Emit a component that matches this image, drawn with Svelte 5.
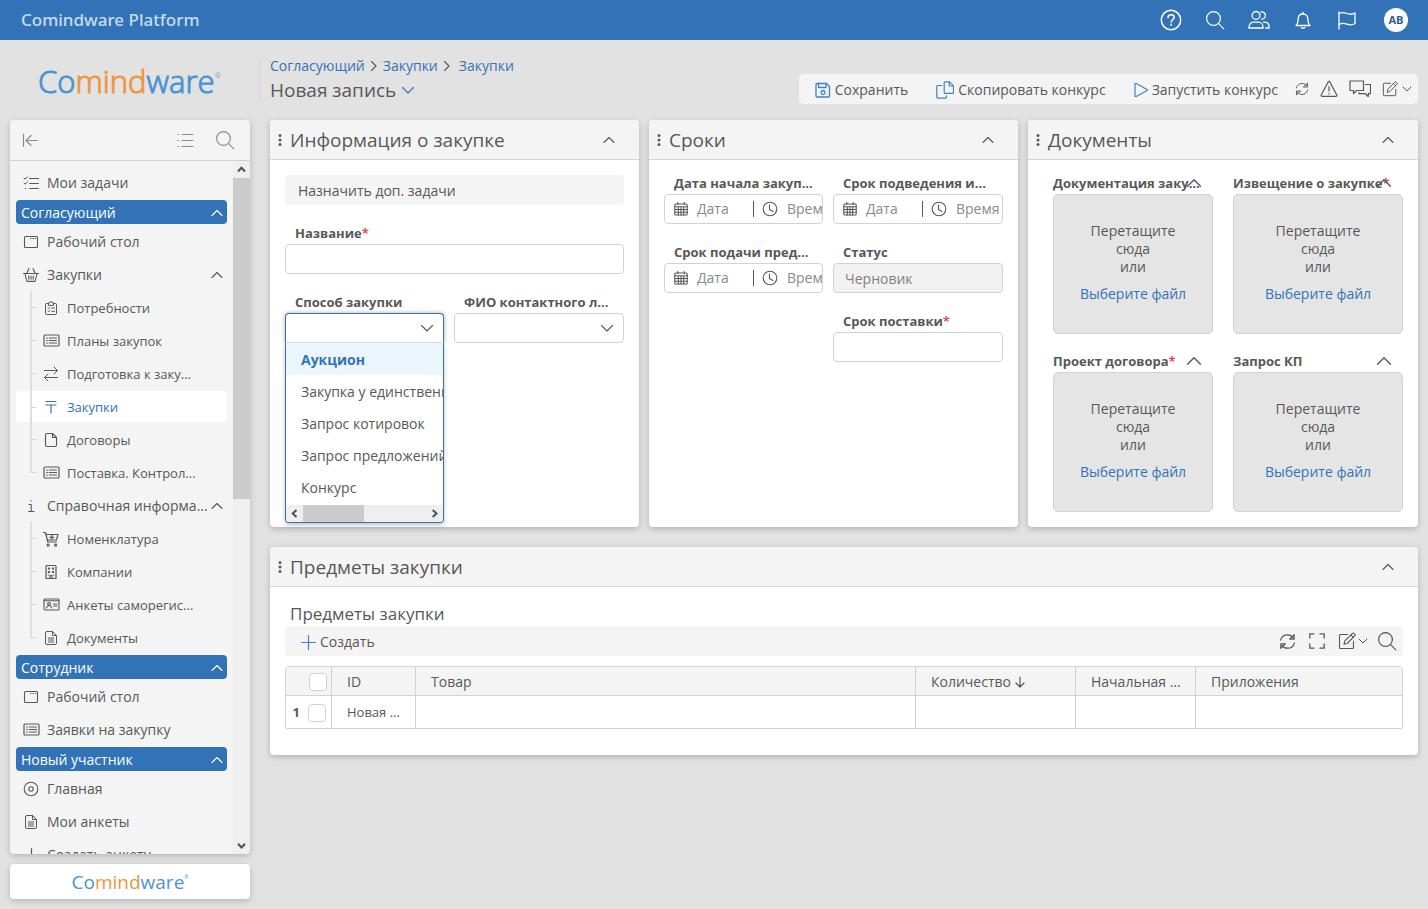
<script>
  const icons = {
    help: { w: 22, d: ['M11 1.300a9.700 9.700 0 1 0 0 19.400a9.700 9.700 0 0 0 0-19.400z', 'M8 8.600c.1-1.900 1.400-2.900 3.100-2.900 1.800 0 3.100 1 3.100 2.600 0 2.300-3 2.300-3 4.600', 'M11.200 15.300v.900'], s: 1.500 },
    search: { w: 20, d: ['M8.500 1.600a6.900 6.900 0 1 0 0 13.800a6.900 6.900 0 0 0 0-13.800z', 'M13.400 13.400l5.400 5.400'], s: 1.200 },
    users: { w: 22, d: ['M8 2.500a3.900 3.900 0 1 0 0 7.800a3.900 3.900 0 0 0 0-7.800z', 'M.8 19c0-4 2.500-5.800 4.700-5.800h5c2.200 0 4.700 1.800 4.700 5.800z', 'M13 3a3.600 3.600 0 1 1 .8 7.100', 'M15.500 13.200h1.200c2.200 0 4.500 1.800 4.500 5.800h-3.500'], s: 1.300 },
    bell: { w: 20, d: ['M3 15.500c1.600-1.500 2.200-3 2.200-6.500 0-3 2-5 4.800-5s4.800 2 4.800 5c0 3.500.6 5 2.200 6.500z', 'M10 4V2.300', 'M8.300 17.300c.3 1.300 3.100 1.300 3.400 0'], s: 1.300 },
    flag: { w: 20, d: ['M2 2v17', 'M2 3.500c3-1.500 5.500-1 8 0s5.500 1 8-.6v10.600c-2.500 1.600-5.500 1.600-8 .6s-5-1.500-8 .4'], s: 1.300 },
    collapse: { w: 18, d: ['M2.500 3v12.500', 'M16.500 9.500H5.500M10 4.500l-5 5 5 5'], s: 1.200 },
    list: { w: 18, d: ['M2 3.500h.6M2 9.500h.6M2 15.500h.6', 'M6 3.500h11M6 9.500h11M6 15.500h11'], s: 1.200 },
    tasks: { w: 16, d: ['M1 3l1.200 1.200L4.500 1.700M1 8l1.200 1.200L4.500 6.700M2.200 13.500h.5', 'M6.500 3.500h9M6.500 8.500h9M6.500 13.500h9'], s: 1 },
    window: { w: 16, d: ['M2.500 2.500h11a1 1 0 0 1 1 1v9a1 1 0 0 1-1 1h-11a1 1 0 0 1-1-1v-9a1 1 0 0 1 1-1z', 'M7.500 4.500h.5M10 4.500h.5M12.500 4.500h.300'], s: 1.100 },
    basket: { w: 16, d: ['M.5 6.500h15', 'M2 6.500l1.600 7a1 1 0 0 0 1 .9h6.800a1 1 0 0 0 1-.9l1.600-7', 'M6 1.500L4 6M10 1.500L12 6', 'M5.800 9v3.200M8 9v3.200M10.200 9v3.200'], s: 1.100 },
    clip: { w: 16, d: ['M5.500 3.500h-2a1 1 0 0 0-1 1v9a1 1 0 0 0 1 1h9a1 1 0 0 0 1-1v-9a1 1 0 0 0-1-1h-2', 'M5.500 5V2.800h1.300a1.200 1.200 0 0 1 2.400 0h1.300V5z', 'M4.800 8l.8.8L7 7.400M8.800 8h2.700M4.800 11l.8.8L7 10.400M8.800 11.300h2.700'], s: 1 },
    panel: { w: 17, d: ['M2 3h13a1 1 0 0 1 1 1v9a1 1 0 0 1-1 1H2a1 1 0 0 1-1-1V4a1 1 0 0 1 1-1z', 'M3.600 6h.8M3.600 8.500h.8M3.600 11h.8M6.300 6h7.200M6.300 8.500h7.200M6.300 11h7.200'], s: 1.200 },
    swap: { w: 16, d: ['M1.500 4.500h13M11 1l3.500 3.500L11 8', 'M14.500 11.500h-13M5 8l-3.500 3.500L5 15'], s: 1 },
    tee: { w: 16, d: ['M3 2.500h10', 'M3 6h10M8 6v8'], s: 1.200 },
    file: { w: 16, d: ['M4 1.500h5.500l4 4V13a1.500 1.500 0 0 1-1.500 1.500H4A1.500 1.500 0 0 1 2.500 13V3A1.500 1.500 0 0 1 4 1.500z', 'M9.500 1.500v4h4'], s: 1.100 },
    doc: { w: 16, d: ['M4 1.500h5.500l4 4V13a1.500 1.500 0 0 1-1.500 1.500H4A1.500 1.500 0 0 1 2.500 13V3A1.500 1.500 0 0 1 4 1.500z', 'M9.500 1.500v4h4', 'M5.300 8h5.400M5.300 10h5.400M5.300 12h5.400'], s: 1 },
    info: { w: 16, d: ['M6 6.500h2.200v7M5.500 13.500h5.500M8 2.500v.6'], s: 1.100 },
    cart: { w: 16, d: ['M.5 1.500h2l2.300 9.500h8.700', 'M3 3.500h12l-1.500 5.500H4.300', 'M8.800 4.300v4M6.800 6.300h4', 'M5 13.200a1 1 0 1 0 .1 0zM12.500 13.200a1 1 0 1 0 .1 0z'], s: 1.200 },
    building: { w: 16, d: ['M4 1.500h8a1 1 0 0 1 1 1v12H3v-12a1 1 0 0 1 1-1z', 'M7 14.500v-3h2v3', 'M5.500 4h1v1h-1zM9.500 4h1v1h-1zM5.500 7.500h1v1h-1zM9.500 7.500h1v1h-1zM5.200 11h.5M10.500 11h.5'], s: 1.200 },
    card: { w: 17, d: ['M2 3h13a1 1 0 0 1 1 1v9a1 1 0 0 1-1 1H2a1 1 0 0 1-1-1V4a1 1 0 0 1 1-1z', 'M1 4.800h15', 'M6 6.500a1.400 1.400 0 1 0 .1 0zM3.500 12c.3-2 1.300-2.500 2.500-2.500s2.200.5 2.500 2.500', 'M10.500 8h3.500M10.500 10h3.500'], s: 1.100 },
    target: { w: 16, d: ['M8 1.200a6.800 6.800 0 1 0 0 13.600a6.800 6.800 0 0 0 0-13.600z', 'M8 5.800a2.200 2.200 0 1 0 0 4.400a2.200 2.200 0 0 0 0-4.400z'], s: 1.100 },
    plus: { w: 16, d: ['M8.500 1.500v14M1.500 8.500h14'], s: 1.200 },
    up: { w: 14, d: ['M2 9.500l5-5 5 5'], s: 1.100 },
    down: { w: 14, d: ['M1.500 4.500l5.500 5.500 5.500-5.500'], s: 1.100 },
    smallDown: { w: 10, d: ['M1 3l4 4 4-4'], s: 1 },
    right: { w: 10, d: ['M2.500 .500L7 5 2.500 9.500'], s: 1.100 },
    save: { w: 16, d: ['M2 1.500h9.500l3 3V14a1 1 0 0 1-1 1H2a1 1 0 0 1-1-1V2.500a1 1 0 0 1 1-1z', 'M3.500 1.500v4h7.500v-4', 'M8 8.500a2 2 0 1 0 .1 0z'], s: 1.300 },
    copy: { w: 18, d: ['M9 .8h4.500l4 4v6.700a.8.8 0 0 1-.8.800H9a.8.8 0 0 1-.8-.8V1.600A.8.8 0 0 1 9 .8z', 'M13.300 .8v4.200h4.200', 'M5.800 4.500H1.600a.8.8 0 0 0-.8.8v11a.8.8 0 0 0 .8.800h8a.8.8 0 0 0 .8-.8v-1.500'], s: 1.200 },
    play: { w: 14, d: ['M1 .8v12.400c0 .5.400.7.800.500l11.300-6.300c.4-.2.400-.6 0-.8L1.800.3C1.400.1 1 .3 1 .8z'], s: 1.200 },
    refresh: { w: 16, d: ['M1.500 6.800C2.300 3.500 5 1.700 8 1.700c2.300 0 4.300 1.100 5.500 2.900', 'M14.300 1.500v4.300h-4.300z', 'M14.500 9.200c-.8 3.300-3.500 5.100-6.500 5.100-2.300 0-4.300-1.100-5.500-2.900', 'M1.700 14.500v-4.300h4.300z'], s: 1.100 },
    warn: { w: 18, d: ['M8.300 1.700L1.200 15a.9.9 0 0 0 .8 1.300h14a.9.900 0 0 0 .8-1.300L9.700 1.700a.8.8 0 0 0-1.400 0z', 'M9 6.500v4.500M9 13.300v.6'], s: 1.200 },
    chat: { w: 22, d: ['M1 3h13.500v9.500H7.500L4.500 15.500v-3H1z', 'M16.500 6.500H21.500v9.200h-2.300v2.800l-3-2.800H10v-1'], s: 1.200 },
    edit: { w: 18, d: ['M9.500 2.500H2.500a1 1 0 0 0-1 1v12a1 1 0 0 0 1 1h12a1 1 0 0 0 1-1V9.500', 'M6 12.300l.8-3.500L14.500 1.300c.4-.4 1-.4 1.400 0l1 1c.4.400.4 1 0 1.400L9.200 11.500z', 'M13 3l2.300 2.300'], s: 1.100 },
    expand: { w: 16, d: ['M5 .8H.8V5M11 .8h4.200V5M5 15.200H.8V11M11 15.200h4.200V11'], s: 1.300 },
    calendar: { w: 14, d: ['M1.800 2h10.400a1 1 0 0 1 1 1v9a1 1 0 0 1-1 1H1.800a1 1 0 0 1-1-1V3a1 1 0 0 1 1-1z', 'M3.800 .5v2M10.200 .5v2', 'M.8 4.800h12.400M.8 7.500h12.400M.8 10.200h12.400M4.300 4.800V13M7 4.800V13M9.700 4.800V13'], s: 1.100 },
    clock: { w: 16, d: ['M8 1.200a6.800 6.800 0 1 0 0 13.600a6.800 6.800 0 0 0 0-13.600z', 'M7.500 4v4.500l3.500 2'], s: 1.100 },
    sort: { w: 12, d: ['M6 1v10M2 7l4 4 4-4'], s: 1.200 },
    dots: { w: 14, d: ['M7 2.500h.01M7 7h.01M7 11.500h.01'], s: 3 }
  };

  const groups = [
    { items: [{ icon: 'tasks', text: 'Мои задачи' }] },
    {
      head: 'Согласующий',
      items: [
        { icon: 'window', text: 'Рабочий стол' },
        {
          icon: 'basket', text: 'Закупки',
          sub: [
            { icon: 'clip', text: 'Потребности' },
            { icon: 'panel', text: 'Планы закупок' },
            { icon: 'swap', text: 'Подготовка к заку...' },
            { icon: 'tee', text: 'Закупки', active: true },
            { icon: 'file', text: 'Договоры' },
            { icon: 'panel', text: 'Поставка. Контрол...' }
          ]
        },
        {
          icon: 'info', text: 'Справочная информа...',
          sub: [
            { icon: 'cart', text: 'Номенклатура' },
            { icon: 'building', text: 'Компании' },
            { icon: 'card', text: 'Анкеты саморегис...' },
            { icon: 'doc', text: 'Документы' }
          ]
        }
      ]
    },
    { head: 'Сотрудник', items: [{ icon: 'window', text: 'Рабочий стол' }, { icon: 'panel', text: 'Заявки на закупку' }] },
    {
      head: 'Новый участник',
      items: [
        { icon: 'target', text: 'Главная' },
        { icon: 'doc', text: 'Мои анкеты' },
        { icon: 'plus', text: 'Создать анкету' }
      ]
    }
  ];

  const methods = ['Аукцион', 'Закупка у единственного поставщика', 'Запрос котировок', 'Запрос предложений', 'Конкурс'];
  const uploads = [
    { text: 'Документация заку...' },
    { text: 'Извещение о закупке', required: true },
    { text: 'Проект договора', required: true },
    { text: 'Запрос КП' }
  ];
</script>

{#snippet icon(name, size)}
  <svg class="icon" width={size ?? icons[name].w} height={size ?? icons[name].w} viewBox="0 0 {icons[name].w} {icons[name].w}" stroke-width={icons[name].s} aria-hidden="true">
    {#each icons[name].d as d}<path {d} />{/each}
  </svg>
{/snippet}

{#snippet logo()}
  <span class="c-blue">Co</span><span class="c-orange">mind</span><span class="c-blue">ware</span><sup>®</sup>
{/snippet}

{#snippet cardHead(title)}
  <header class="card-head">
    {@render icon('dots')}
    <h2>{title}</h2>
    <button class="bare" aria-label="Свернуть">{@render icon('up')}</button>
  </header>
{/snippet}

{#snippet dateField(id, label)}
  <div class="field">
    <label for={id}>{label}</label>
    <div class="box datetime">
      {@render icon('calendar')}
      <input class="date" {id} type="text" placeholder="Дата" />
      <span class="divider"></span>
      {@render icon('clock')}
      <input class="time" type="text" placeholder="Время" aria-label="Время" />
    </div>
  </div>
{/snippet}

<div class="app">
  <header class="topbar">
    <a class="brand" href="#home">Comindware Platform</a>
    <button aria-label="Справка">{@render icon('help')}</button>
    <button aria-label="Поиск">{@render icon('search')}</button>
    <button aria-label="Пользователи">{@render icon('users')}</button>
    <button aria-label="Уведомления">{@render icon('bell')}</button>
    <button aria-label="Флаг">{@render icon('flag')}</button>
    <button class="avatar">АВ</button>
  </header>

  <div class="layout">
    <aside>
      <div class="logo">{@render logo()}</div>
      <nav class="side">
        <div class="side-head">
          <button class="bare" aria-label="Свернуть меню">{@render icon('collapse')}</button>
          <span class="grow"></span>
          <button class="bare" aria-label="Список">{@render icon('list')}</button>
          <button class="bare" aria-label="Поиск в меню">{@render icon('search')}</button>
        </div>
        <div class="side-body">
          <div class="side-list">
            {#each groups as g}
              {#if g.head}
                <button class="band">{g.head}{@render icon('up')}</button>
              {/if}
              <ul>
                {#each g.items as item}
                  <li>
                    <a class="item" href="#item">
                      <span class="ico">{@render icon(item.icon)}</span>
                      <span class="grow">{item.text}</span>
                      {#if item.sub}{@render icon('up')}{/if}
                    </a>
                    {#if item.sub}
                      <ul class="sub">
                        {#each item.sub as s}
                          <li class:active={s.active}>
                            <a class="item" href="#item">
                              <span class="ico">{@render icon(s.icon)}</span>
                              <span class="grow">{s.text}</span>
                            </a>
                          </li>
                        {/each}
                      </ul>
                    {/if}
                  </li>
                {/each}
              </ul>
            {/each}
          </div>
          <div class="vscroll">
            <svg class="arrow" width="17" height="17" viewBox="0 0 17 17"><path d="M5 10.500l3.500-3.800 3.500 3.800" /></svg>
            <span class="vthumb"></span>
            <span class="grow"></span>
            <svg class="arrow" width="17" height="17" viewBox="0 0 17 17"><path d="M5 6.700l3.500 3.800L12 6.700" /></svg>
          </div>
        </div>
      </nav>
      <div class="logo-small">{@render logo()}</div>
    </aside>

    <main>
      <div class="page-head">
        <div class="titles">
          <nav class="crumbs">
            <a href="#a">Согласующий</a>{@render icon('right')}<a href="#b">Закупки</a>{@render icon('right')}<a class="last" href="#c">Закупки</a>
          </nav>
          <h1>Новая запись <button class="bare title-arrow" aria-label="Меню записи">{@render icon('down')}</button></h1>
        </div>
        <div class="toolbar">
          <button class="act">{@render icon('save')}Сохранить</button>
          <button class="act">{@render icon('copy')}Скопировать конкурс</button>
          <button class="act">{@render icon('play')}Запустить конкурс</button>
          <div class="tools">
            <button class="bare" aria-label="Обновить">{@render icon('refresh', 14)}</button>
            <button class="bare" aria-label="Ошибки">{@render icon('warn')}</button>
            <button class="bare" aria-label="Обсуждение">{@render icon('chat')}</button>
            <button class="bare pair" aria-label="Изменить">{@render icon('edit', 16)}{@render icon('smallDown')}</button>
          </div>
        </div>
      </div>

      <div class="cards">
        <section class="card">
          {@render cardHead('Информация о закупке')}
          <div class="body info-body">
            <button class="wide">Назначить доп. задачи</button>
            <div class="field">
              <label for="name">Название<i>*</i></label>
              <input class="box" id="name" type="text" />
            </div>
            <div class="two">
              <div class="field">
                <label for="method">Способ закупки</label>
                <div class="box select open">
                  <select id="method"><option value=""></option></select>
                  {@render icon('down')}
                  <div class="menu">
                    <ul role="listbox" aria-label="Способ закупки">
                      {#each methods as m, i}
                        <li role="option" aria-selected={i === 0}>{m}</li>
                      {/each}
                    </ul>
                    <div class="hscroll">
                      <svg class="arrow" width="17" height="17" viewBox="0 0 17 17"><path d="M10.500 5L6.700 8.500l3.800 3.500" /></svg>
                      <span class="hthumb"></span>
                      <span class="grow"></span>
                      <svg class="arrow" width="17" height="17" viewBox="0 0 17 17"><path d="M6.700 5l3.800 3.500-3.800 3.500" /></svg>
                    </div>
                  </div>
                </div>
              </div>
              <div class="field">
                <label for="contact">ФИО контактного л...</label>
                <div class="box select">
                  <select id="contact"><option value=""></option></select>
                  {@render icon('down')}
                </div>
              </div>
            </div>
          </div>
        </section>

        <section class="card">
          {@render cardHead('Сроки')}
          <div class="body two terms">
            <div class="col">
              {@render dateField('start', 'Дата начала закуп...')}
              {@render dateField('offers', 'Срок подачи пред...')}
            </div>
            <div class="col">
              {@render dateField('results', 'Срок подведения и...')}
              <div class="field">
                <label for="status">Статус</label>
                <input class="box" id="status" type="text" value="Черновик" disabled />
              </div>
              <div class="field">
                <label for="delivery">Срок поставки<i>*</i></label>
                <input class="box" id="delivery" type="text" />
              </div>
            </div>
          </div>
        </section>

        <section class="card">
          {@render cardHead('Документы')}
          <div class="body uploads">
            {#each uploads as u}
              <div class="upload">
                <div class="upload-head">
                  <span class="caption">{u.text}{#if u.required}<i>*</i>{/if}</span>
                  <button class="bare" aria-label="Свернуть">{@render icon('up', 18)}</button>
                </div>
                <div class="drop">
                  <p>Перетащите<br />сюда<br />или</p>
                  <button class="bare pick">Выберите файл</button>
                </div>
              </div>
            {/each}
          </div>
        </section>
      </div>

      <section class="card items">
        {@render cardHead('Предметы закупки')}
        <div class="body">
          <h3>Предметы закупки</h3>
          <div class="grid-tools">
            <button class="act">{@render icon('plus')}Создать</button>
            <span class="grow"></span>
            <button class="bare" aria-label="Обновить">{@render icon('refresh', 17)}</button>
            <button class="bare" aria-label="Развернуть">{@render icon('expand')}</button>
            <button class="bare pair" aria-label="Изменить">{@render icon('edit')}{@render icon('smallDown')}</button>
            <button class="bare" aria-label="Найти">{@render icon('search')}</button>
          </div>
          <div class="table-wrap">
            <table>
              <colgroup><col class="c1" /><col class="c2" /><col class="c3" /><col class="c4" /><col class="c5" /><col /></colgroup>
              <thead>
                <tr>
                  <th class="pick-cell"><input type="checkbox" aria-label="Выбрать все" /></th>
                  <th>ID</th>
                  <th>Товар</th>
                  <th><span class="sorted">Количество{@render icon('sort')}</span></th>
                  <th>Начальная ...</th>
                  <th>Приложения</th>
                </tr>
              </thead>
              <tbody>
                <tr>
                  <td class="pick-cell"><b>1</b><input type="checkbox" aria-label="Выбрать строку 1" /></td>
                  <td>Новая ...</td>
                  <td></td><td></td><td></td><td></td>
                </tr>
              </tbody>
            </table>
          </div>
        </div>
      </section>
    </main>
  </div>
</div>

<style>
  :global(body) { margin: 0; background: #e2e2e2; }
  .app { height: 100vh; display: flex; flex-direction: column; font: 14px/20px "Open Sans", "Noto Sans", sans-serif; color: #585858; }
  .app * { box-sizing: border-box; }
  ul, h1, h2, h3, p { margin: 0; padding: 0; list-style: none; font-weight: 400; }
  button, input, select { font: inherit; color: inherit; }
  button { background: none; border: 0; padding: 0; cursor: pointer; }
  a { color: inherit; text-decoration: none; }
  i { color: #d9534f; font-style: normal; }
  .icon { display: block; flex: none; fill: none; stroke: currentColor; stroke-linecap: round; stroke-linejoin: round; }
  .bare { display: flex; align-items: center; }
  .grow { flex: 1; min-width: 0; }

  .topbar { flex: none; height: 40px; display: flex; align-items: center; padding: 0 20px 0 21px; background: #3273b8; color: #fff; }
  .brand { margin-right: auto; font-family: "Noto Sans", sans-serif; font-size: 17px; font-weight: 500; color: #c8dcf0; }
  .topbar button { width: 44px; height: 40px; display: flex; align-items: center; justify-content: center; }
  .topbar .avatar { width: 24px; height: 24px; margin-left: 15px; border-radius: 50%; background: #fff; color: #2a5f98; font-size: 11px; font-weight: 700; }

  .layout { flex: 1; min-height: 0; display: flex; gap: 20px; padding: 0 10px 10px; }
  aside { flex: none; width: 240px; display: flex; flex-direction: column; }
  .logo { height: 80px; padding-left: 28px; font: 300 31px/82px "Open Sans", sans-serif; white-space: nowrap; -webkit-text-stroke: 1px transparent; }
  .c-blue { color: #4a94d2; -webkit-text-stroke-color: #4a94d2; }
  .c-orange { color: #ee9640; -webkit-text-stroke-color: #ee9640; }
  .logo span { -webkit-text-stroke-width: 1px; }
  sup { font-size: 8px; line-height: 1; color: #4a94d2; vertical-align: 15px; }
  .side { flex: 1; min-height: 0; display: flex; flex-direction: column; border-radius: 4px; background: #f4f4f4; box-shadow: 0 2px 6px rgba(0, 0, 0, .2); }
  .side-head { flex: none; height: 41px; display: flex; align-items: center; gap: 21px; padding: 0 15px 0 11px; border-bottom: 1px solid #d0d0d0; color: #8c8c8c; }
  .side-body { flex: 1; min-height: 0; display: flex; border-radius: 0 0 4px 4px; overflow: hidden; }
  .side-list { flex: 1; min-width: 0; padding: 5px 6px 0; overflow: hidden; }
  .band { width: 100%; height: 24px; margin: 1px 0; padding: 1px 3px 0 5px; display: flex; align-items: center; justify-content: space-between; border-radius: 4px; background: #3273b8; color: #fff; }
  .item { height: 33px; display: flex; align-items: center; padding: 0 3px 0 7px; white-space: nowrap; }
  .ico { width: 24px; display: flex; }
  .sub { position: relative; font-size: 13px; }
  .sub::before { content: ""; position: absolute; z-index: 1; left: 14px; top: 0; bottom: 16px; width: 2px; background: #dedede; }
  .sub li { position: relative; }
  .sub li::before { content: ""; position: absolute; left: 16px; top: 16px; width: 4px; height: 1px; background: #d4d4d4; }
  .sub .item { padding-left: 27px; }
  .sub .active { margin: 1px 0; border-radius: 4px; background: #fff; color: #3273b8; }
  .active .item { height: 31px; }
  .vscroll { flex: none; width: 17px; display: flex; flex-direction: column; background: #efefef; }
  .vthumb { height: 321px; background: #cbcbcb; }
  .arrow { display: block; flex: none; fill: none; stroke: #505050; stroke-width: 2; }
  .logo-small { flex: none; height: 35px; margin-top: 10px; border-radius: 4px; background: #fff; box-shadow: 0 2px 6px rgba(0, 0, 0, .2); text-align: center; font: 400 19px/36px "Open Sans", sans-serif; }
  .logo-small sup { font-size: 5px; vertical-align: 10px; }

  main { flex: 1; min-width: 0; }
  .page-head { height: 80px; display: flex; align-items: flex-end; justify-content: space-between; padding-bottom: 16px; }
  .titles { margin-left: -11px; padding-left: 10px; margin-bottom: 4px; height: 40px; border-left: 1px solid #d4d4d4; }
  .crumbs { height: 12px; display: flex; align-items: center; gap: 4px; color: #585858; }
  .crumbs a { color: #3273b8; }
  .crumbs .last { margin-left: 3px; }
  h1 { display: flex; align-items: center; gap: 5px; margin-top: 6px; font-size: 19px; line-height: 24px; }
  .title-arrow { color: #3273b8; }
  .toolbar { height: 30px; display: flex; align-items: center; gap: 28px; padding: 0 6px 0 16px; border-radius: 5px; background: #f4f4f4; }
  .act { display: flex; align-items: center; gap: 4px; padding-top: 1px; white-space: nowrap; }
  .act .icon { color: #3f83c6; }
  .tools { display: flex; align-items: center; gap: 11px; margin-left: -11px; }
  .pair { gap: 4px; }

  .cards { display: grid; grid-template-columns: 369fr 369fr 390fr; gap: 10px; }
  .card { min-width: 0; border-radius: 4px; background: #fff; box-shadow: 0 2px 6px rgba(0, 0, 0, .22); }
  .card-head { height: 40px; display: flex; align-items: center; padding: 0 23px 0 3px; border-bottom: 1px solid #d4d4d4; border-radius: 4px 4px 0 0; background: #f4f4f4; }
  h2 { flex: 1; margin-left: 3px; font-size: 19px; line-height: 26px; }
  .body { padding: 15px; }
  .info-body { display: flex; flex-direction: column; gap: 19px; }
  .wide { height: 30px; padding: 2px 13px 0; border-radius: 4px; background: #f4f4f4; text-align: left; }
  .two { display: grid; grid-template-columns: 159fr 170fr; gap: 10px; }
  .field { min-width: 0; display: flex; flex-direction: column; }
  label, .caption { font-size: 13px; font-weight: 700; line-height: 18px; white-space: nowrap; }
  label { height: 20px; padding-left: 10px; }
  .box { width: 100%; height: 30px; border: 1px solid #d2d2d2; border-radius: 4px; background: #fff; padding: 0 11px; }
  .box:disabled { background: #f2f2f2; color: #808080; }
  .terms { padding-top: 14px; }
  .col { min-width: 0; display: flex; flex-direction: column; gap: 19px; }
  .datetime { display: flex; align-items: center; padding: 0 0 0 9px; overflow: hidden; }
  .datetime input { border: 0; padding: 0; background: none; outline: 0; }
  .datetime input::placeholder { color: #8a8a8a; opacity: 1; }
  .datetime .date { flex: none; width: 47px; margin-left: 9px; }
  .divider { flex: none; width: 1px; height: 16px; margin: 0 8px 0 9px; background: #585858; }
  .datetime .time { flex: 1; min-width: 0; margin-left: 9px; }
  .select { position: relative; display: flex; align-items: center; padding: 0 9px 0 0; }
  .select select { flex: 1; min-width: 0; height: 28px; border: 0; background: none; appearance: none; outline: 0; }
  .open { border-color: #3273b8; box-shadow: 0 0 4px rgba(0, 0, 0, .35); border-radius: 4px 4px 0 0; border-bottom-color: #e4e4e4; }
  .menu { position: absolute; z-index: 2; left: -1px; right: -1px; top: 29px; border: 1px solid #3273b8; border-top: 0; border-radius: 0 0 4px 4px; overflow: hidden; background: #fff; box-shadow: 0 2px 4px rgba(0, 0, 0, .25); }
  .menu ul { padding-bottom: 2px; overflow: hidden; }
  .menu li { height: 32px; padding-left: 15px; line-height: 34px; white-space: nowrap; }
  .menu li[aria-selected="true"] { background: #eaf5fe; color: #3273b8; font-weight: 700; }
  .hscroll { display: flex; height: 17px; background: #efefef; }
  .hthumb { width: 61px; background: #cbcbcb; }

  .uploads { display: grid; grid-template-columns: 160fr 170fr; gap: 18px 20px; padding: 14px 15px 15px 25px; }
  .upload { min-width: 0; }
  .upload-head { position: relative; height: 20px; }
  .upload-head .bare { position: absolute; right: 10px; top: 0; }
  .caption { display: block; }
  .drop { height: 140px; display: flex; flex-direction: column; align-items: center; justify-content: center; gap: 8px; padding-bottom: 2px; border: 1px solid #d2d2d2; border-radius: 5px; background: #e5e5e5; text-align: center; line-height: 18px; }
  .pick { color: #3273b8; line-height: 20px; }

  .items { margin-top: 20px; }
  .items .body { padding: 16px 15px 26px; }
  h3 { padding-left: 5px; margin-bottom: 1px; font-size: 17px; line-height: 22px; }
  .grid-tools { height: 30px; display: flex; align-items: center; gap: 13px; padding: 0 6px 0 15px; border-radius: 4px; background: #f4f4f4; }
  .grid-tools .pair { gap: 2px; margin-right: -4px; }
  .table-wrap { margin-top: 10px; border: 1px solid #d2d2d2; border-radius: 4px 4px 2px 2px; overflow: hidden; }
  table { width: 100%; table-layout: fixed; border-collapse: separate; border-spacing: 0; }
  .c1 { width: 46px; }
  .c2 { width: 84px; }
  .c3 { width: 500px; }
  .c4 { width: 160px; }
  .c5 { width: 120px; }
  th, td { height: 32px; padding: 0 15px; border-right: 1px solid #d2d2d2; text-align: left; font-weight: 400; white-space: nowrap; }
  th:last-child, td:last-child { border-right: 0; }
  th { height: 29px; padding-top: 2px; border-bottom: 1px solid #d2d2d2; background: #f4f4f4; }
  td { font-size: 13px; }
  .pick-cell { padding: 0 4px; text-align: right; }
  td.pick-cell { padding-right: 5px; }
  .pick-cell b { margin-right: 8px; }
  .sorted { display: flex; align-items: center; gap: 3px; }
  input[type="checkbox"] { appearance: none; width: 18px; height: 18px; margin: 0; border: 1px solid #d2d2d2; border-radius: 4px; background: #fff; vertical-align: middle; }
</style>
